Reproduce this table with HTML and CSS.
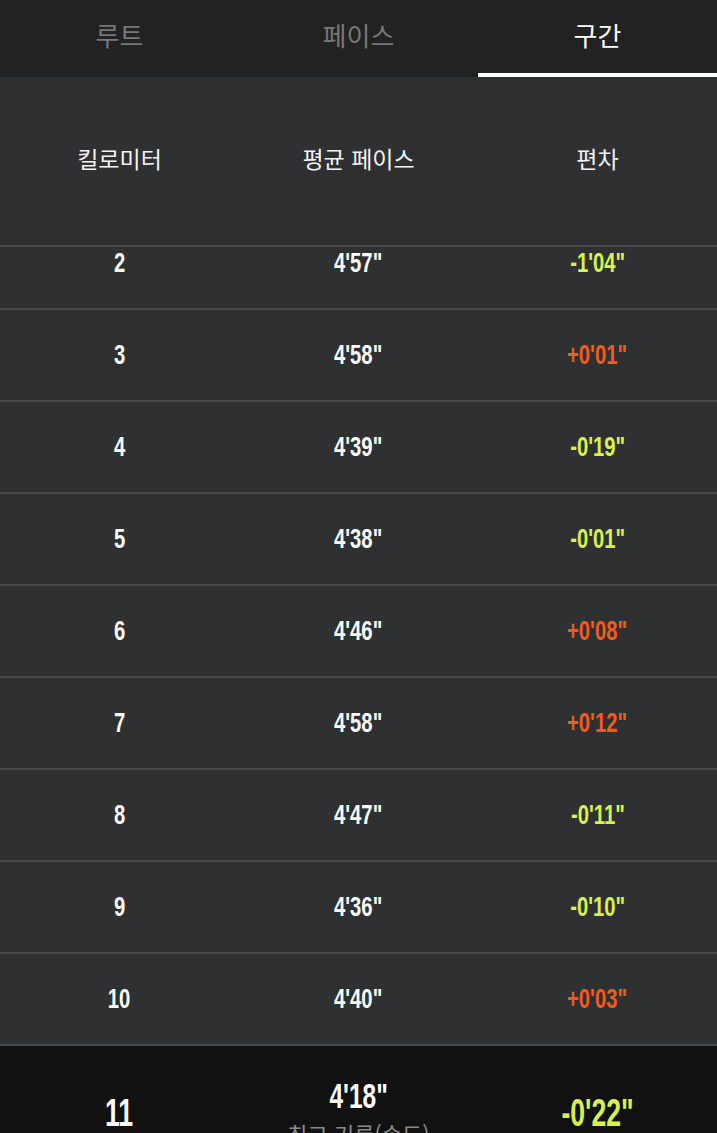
FILE: index.html
```html
<!DOCTYPE html>
<html lang="ko">
<head>
<meta charset="utf-8">
<link rel="stylesheet" href="styles.css">
</head>
<body>
<div class="app">
  <nav class="tabs">
    <div class="tab">루트</div>
    <div class="tab">페이스</div>
    <div class="tab active">구간</div>
  </nav>
  <header class="head">
    <div class="col">킬로미터</div>
    <div class="col">평균 페이스</div>
    <div class="col">편차</div>
  </header>
  <div class="viewport">
    <div class="list">
      <div class="row"><span class="num">2</span><span class="num">4'57"</span><span class="num good">-1'04"</span></div>
      <div class="row"><span class="num">3</span><span class="num">4'58"</span><span class="num bad">+0'01"</span></div>
      <div class="row"><span class="num">4</span><span class="num">4'39"</span><span class="num good">-0'19"</span></div>
      <div class="row"><span class="num">5</span><span class="num">4'38"</span><span class="num good">-0'01"</span></div>
      <div class="row"><span class="num">6</span><span class="num">4'46"</span><span class="num bad">+0'08"</span></div>
      <div class="row"><span class="num">7</span><span class="num">4'58"</span><span class="num bad">+0'12"</span></div>
      <div class="row"><span class="num">8</span><span class="num">4'47"</span><span class="num good">-0'11"</span></div>
      <div class="row"><span class="num">9</span><span class="num">4'36"</span><span class="num good">-0'10"</span></div>
      <div class="row"><span class="num">10</span><span class="num">4'40"</span><span class="num bad">+0'03"</span></div>
      <div class="row best">
        <span class="num big">11</span>
        <div class="stack">
          <span class="num mid">4'18"</span>
          <span class="sub">최고 기록(속도)</span>
        </div>
        <span class="num big good">-0'22"</span>
      </div>
    </div>
  </div>
</div>
</body>
</html>
```

FILE: styles.css
```css
html, body {
  margin: 0;
  padding: 0;
  height: 100%;
  overflow: hidden;
  background: #2f3032;
}
.app {
  height: 1133px;
  display: flex;
  flex-direction: column;
  overflow: hidden;
  font-family: "Noto Sans CJK KR", "Noto Sans", sans-serif;
}
.tabs {
  display: grid;
  grid-template-columns: repeat(3, 1fr);
  height: 77px;
  background: #222222;
  flex: none;
}
.tab {
  display: flex;
  justify-content: center;
  align-items: flex-start;
  padding-top: 19px;
  box-sizing: border-box;
  font-size: 26px;
  line-height: 32px;
  color: #777777;
  border-bottom: 4px solid transparent;
}
.tab.active {
  color: #ffffff;
  border-bottom-color: #ffffff;
}
.head {
  display: grid;
  grid-template-columns: repeat(3, 1fr);
  height: 170px;
  flex: none;
  box-sizing: border-box;
  border-bottom: 2px solid #48494b;
  background: #2f3032;
  position: relative;
  z-index: 1;
}
.col {
  display: flex;
  justify-content: center;
  align-items: center;
  padding-bottom: 7px;
  font-size: 23px;
  color: #f2f2f2;
}
.viewport {
  flex: 1;
  overflow: hidden;
}
.list {
  margin-top: -29px;
}
.row {
  display: grid;
  grid-template-columns: repeat(3, 1fr);
  height: 92px;
  box-sizing: border-box;
  border-bottom: 2px solid #48494b;
  align-items: center;
  justify-items: center;
}
.num {
  display: inline-block;
  font-family: "Liberation Sans", Arial, sans-serif;
  font-weight: 700;
  font-size: 27px;
  line-height: 1;
  color: #ffffff;
  transform: scaleX(0.75);
  white-space: nowrap;
}
.good { color: #d7f24a; }
.bad { color: #f35a1b; }
.row.best {
  background: #111111;
  height: 134px;
  border-bottom: none;
}
.num.big {
  font-size: 38px;
  transform: scaleX(0.7);
}
.num.mid {
  font-size: 35px;
  transform: scaleX(0.7);
}
.stack {
  display: flex;
  flex-direction: column;
  align-items: center;
}
.sub {
  margin-top: 5px;
  font-size: 22px;
  line-height: 30px;
  color: #8a8a8a;
  white-space: nowrap;
}
```
